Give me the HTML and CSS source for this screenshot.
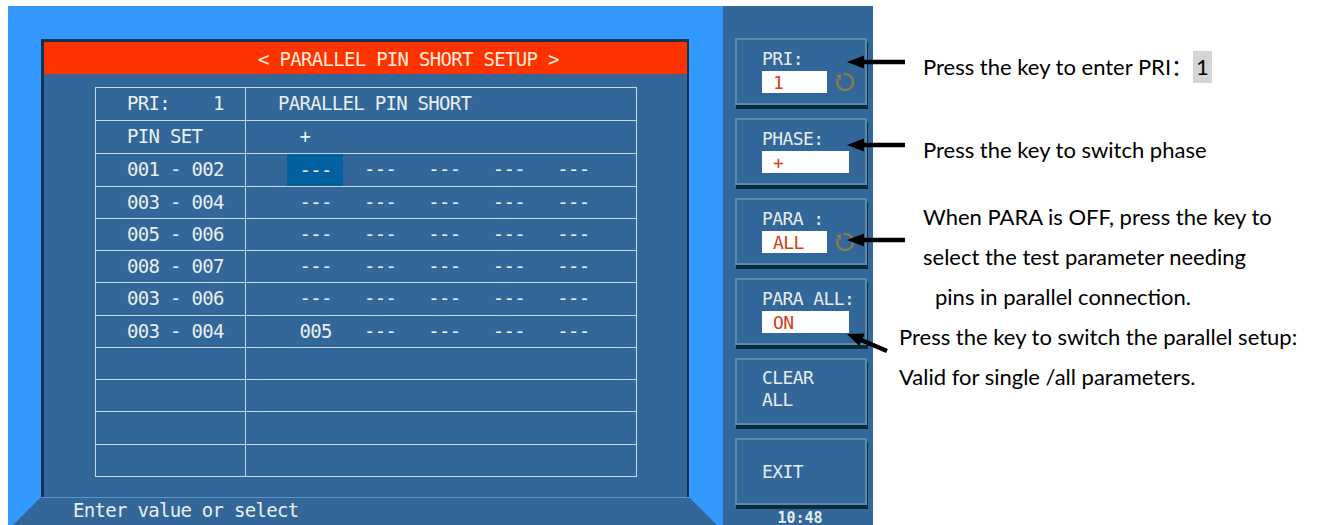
FILE: index.html
```html
<!DOCTYPE html>
<html>
<head>
<meta charset="utf-8">
<link rel="stylesheet" href="styles.css">
</head>
<body>
<div class="page">
  <div class="screen">
    <div class="main">
      <div class="panel">
        <div class="title">&lt; PARALLEL PIN SHORT SETUP &gt;</div>
        <div class="body">
          <div class="grid">
            <div class="row"><div class="c1">PRI:    1</div><div class="c2">PARALLEL PIN SHORT</div></div>
            <div class="row"><div class="c1">PIN SET</div><div class="c2">  +</div></div>
            <div class="row"><div class="c1">001 - 002</div><div class="c2">  <span class="sel">---</span>   ---   ---   ---   ---</div></div>
            <div class="row"><div class="c1">003 - 004</div><div class="c2">  ---   ---   ---   ---   ---</div></div>
            <div class="row"><div class="c1">005 - 006</div><div class="c2">  ---   ---   ---   ---   ---</div></div>
            <div class="row"><div class="c1">008 - 007</div><div class="c2">  ---   ---   ---   ---   ---</div></div>
            <div class="row"><div class="c1">003 - 006</div><div class="c2">  ---   ---   ---   ---   ---</div></div>
            <div class="row"><div class="c1">003 - 004</div><div class="c2">  005   ---   ---   ---   ---</div></div>
            <div class="row"><div class="c1"></div><div class="c2"></div></div>
            <div class="row"><div class="c1"></div><div class="c2"></div></div>
            <div class="row"><div class="c1"></div><div class="c2"></div></div>
            <div class="row"><div class="c1"></div><div class="c2"></div></div>
          </div>
        </div>
      </div>
      <div class="status">Enter value or select</div>
    </div>
    <div class="softkeys">
      <div class="rule"></div>
      <div class="key">
        <div class="lbl">PRI:</div>
        <div class="val-row">
          <div class="val">1</div>
          <svg class="refresh" viewBox="0 0 22 22" width="22" height="22"><path d="M4 7.5 A8 8 0 1 0 9.5 3.2" fill="none" stroke="#b08232" stroke-width="2.2"/><path d="M2 4 L6.5 9.5 L7.2 3.6 Z" fill="#b08232"/></svg>
        </div>
      </div>
      <div class="key">
        <div class="lbl">PHASE:</div>
        <div class="val-row"><div class="val wide">+</div></div>
      </div>
      <div class="key">
        <div class="lbl">PARA :</div>
        <div class="val-row">
          <div class="val">ALL</div>
          <svg class="refresh" viewBox="0 0 22 22" width="22" height="22"><path d="M4 7.5 A8 8 0 1 0 9.5 3.2" fill="none" stroke="#b08232" stroke-width="2.2"/><path d="M2 4 L6.5 9.5 L7.2 3.6 Z" fill="#b08232"/></svg>
        </div>
      </div>
      <div class="key">
        <div class="lbl">PARA ALL:</div>
        <div class="val-row"><div class="val wide">ON</div></div>
      </div>
      <div class="key two">
        <div class="lbl">CLEAR</div>
        <div class="lbl">ALL</div>
      </div>
      <div class="key exit">
        <div class="lbl">EXIT</div>
      </div>
      <div class="clock">10:48</div>
    </div>
  </div>
  <div class="notes">
    <div class="note n1">Press the key to enter PRI：<span class="hl">1</span></div>
    <div class="note n2">Press the key to switch phase</div>
    <div class="note n3">When PARA is OFF, press the key to</div>
    <div class="note n4">select the test parameter needing</div>
    <div class="note n5">pins in parallel connection.</div>
    <div class="note n6">Press the key to switch the parallel setup:</div>
    <div class="note n7">Valid for single /all parameters.</div>
  </div>
  <svg class="arrows" width="1317" height="525" viewBox="0 0 1317 525">
    <g stroke="#000" stroke-width="4.5" fill="none">
      <line x1="905" y1="62" x2="860" y2="62"/>
      <line x1="905" y1="145" x2="860" y2="145"/>
      <line x1="905" y1="240" x2="860" y2="240"/>
      <line x1="887" y1="351" x2="860" y2="339.5"/>
    </g>
    <g fill="#000">
      <polygon points="847,62 864,55.5 864,68.5"/>
      <polygon points="847,145 864,138.5 864,151.5"/>
      <polygon points="847,240 864,233.5 864,246.5"/>
      <polygon points="847,334 859.2,346 864.6,333.6"/>
    </g>
  </svg>
</div>
</body>
</html>
```

FILE: styles.css
```css
body {
  margin: 0;
  background: #ffffff;
  font-family: "DejaVu Sans Mono", "Liberation Mono", monospace;
}

.page {
  position: relative;
  display: flex;
  align-items: flex-start;
  padding: 6px 0 0 8px;
  height: 525px;
  box-sizing: border-box;
  overflow: hidden;
}

.screen {
  flex: none;
  width: 865px;
  height: 519px;
  background: #3399ff;
  display: flex;
  overflow: hidden;
}

.main {
  width: 715px;
  padding: 33px 0 0 33px;
  box-sizing: border-box;
}

.panel {
  width: 648px;
  height: 458px;
  box-sizing: border-box;
  background: #336699;
  border-top: 3px solid #15324f;
  border-left: 3px solid #15324f;
  border-right: 2px solid #15324f;
}

.title {
  height: 32px;
  background: #ff3300;
  color: #ffeade;
  font-size: 19px;
  letter-spacing: -0.7px;
  line-height: 35px;
  padding-left: 214px;
  white-space: pre;
}

.body {
  padding: 13px 0 0 51px;
}

.grid {
  width: 542px;
  height: 390px;
  box-sizing: border-box;
  border: 1px solid #c6d8e4;
  display: grid;
  grid-template-rows: repeat(12, 1fr);
}

.row {
  display: grid;
  grid-template-columns: 150px 1fr;
  border-top: 1px solid #c6d8e4;
}

.row:first-child {
  border-top: 0;
}

.c1,
.c2 {
  white-space: pre;
  color: #e8f0f2;
  font-size: 19px;
  letter-spacing: -0.7px;
  line-height: 31px;
  overflow: hidden;
}

.c1 {
  border-right: 1px solid #c6d8e4;
  padding-left: 31px;
}

.c2 {
  padding-left: 32px;
}

.sel {
  display: inline-block;
  vertical-align: top;
  background: #0060a0;
  padding: 0 11px 0 12px;
  margin: 0 -11px 0 -12px;
  line-height: 32px;
}

.status {
  height: 28px;
  width: 704px;
  margin-left: -28px;
  box-sizing: border-box;
  background: #336699;
  border-top: 1px solid #5f93c6;
  clip-path: polygon(28px 0, calc(100% - 28px) 0, 100% 100%, 0 100%);
  padding-left: 60px;
  color: #e8f0f2;
  font-size: 19px;
  letter-spacing: -0.7px;
  line-height: 24px;
  white-space: pre;
}

.softkeys {
  flex: none;
  width: 150px;
  height: 519px;
  box-sizing: border-box;
  background: #336699;
  padding: 25px 6px 0 12px;
  display: flex;
  flex-direction: column;
}

.rule {
  height: 1px;
  background: #8fb2c8;
  margin: 0 1px 7px 0;
}

.key {
  height: 67px;
  flex: none;
  box-sizing: border-box;
  border: 2px solid #5a8ca4;
  box-shadow: 1px 4px 0 #0b2b40;
  margin-bottom: 13px;
  padding: 9px 0 0 25px;
  color: #e4eef0;
  font-size: 18px;
  letter-spacing: -0.6px;
  line-height: 20px;
}

.key.two .lbl {
  line-height: 22px;
}

.key.two {
  padding-top: 7px;
}

.key.exit {
  display: flex;
  align-items: center;
  padding-top: 0;
  margin-bottom: 6px;
}

.val-row {
  display: flex;
  align-items: center;
  margin-top: 2px;
}

.val {
  width: 65px;
  height: 22px;
  box-sizing: border-box;
  background: #ffffff;
  color: #d2401a;
  padding-left: 11px;
  line-height: 23px;
}

.val.wide {
  width: 87px;
}

.refresh {
  margin-left: 7px;
  opacity: 0.75;
}

.clock {
  text-align: center;
  color: #e4eef0;
  font-weight: bold;
  font-size: 15px;
  line-height: 13px;
  margin-top: 1px;
  padding-right: 2px;
}

.notes {
  flex: none;
  padding-top: 41px;
  display: flex;
  flex-direction: column;
}

.note {
  height: 40px;
  line-height: 40px;
  white-space: pre;
  font-family: Lato, "Noto Sans CJK SC", sans-serif;
  font-size: 22px;
  color: #000000;
  margin-left: 50px;
}

.n2 {
  margin-top: 43px;
}

.n3 {
  margin-top: 27px;
}

.n5 {
  margin-left: 62px;
}

.n6,
.n7 {
  margin-left: 26px;
}

.hl {
  display: inline-block;
  background: #d4d4d4;
  line-height: 32px;
  padding: 0 3px;
}

.arrows {
  position: absolute;
  top: 0;
  left: 0;
  pointer-events: none;
}
```
